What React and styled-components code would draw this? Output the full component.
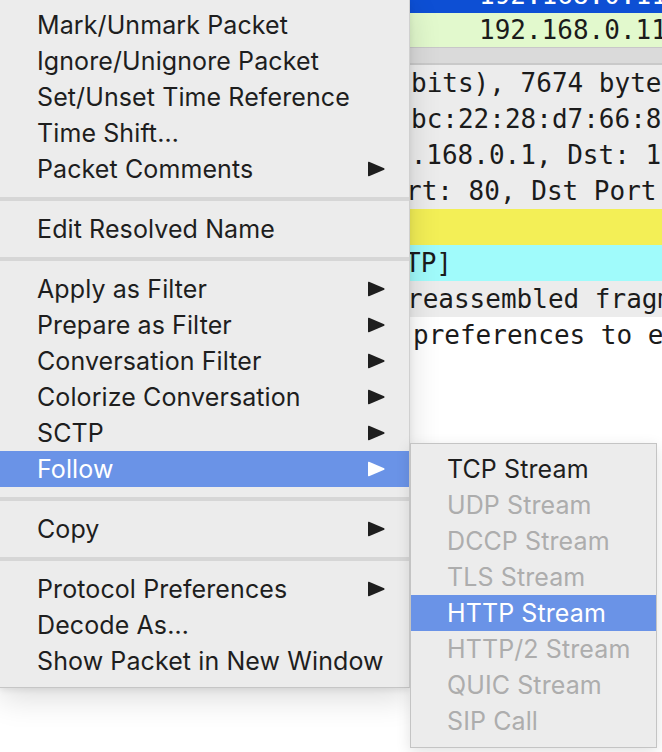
import React from 'react';
import styled, { createGlobalStyle } from 'styled-components';

const GlobalStyle = createGlobalStyle`
	html, body {
		margin: 0;
		padding: 0;
		background: #ffffff;
		overflow: hidden;
	}
`;

const Frame = styled.div`
	position: relative;
	width: 662px;
	height: 752px;
	display: flex;
	overflow: hidden;
	background: #ffffff;
	font-family: Inter, 'Liberation Sans', sans-serif;
`;

const MenuColumn = styled.div`
	width: 410px;
	flex-shrink: 0;
	position: relative;
	z-index: 2;
`;

const Menu = styled.div`
	background: #ececec;
	padding: 7px 0 8px;
	border-bottom: 1px solid #c6c6c6;
	border-right: 1px solid #d0d0d0;
	box-sizing: border-box;
	box-shadow: 0 10px 30px rgba(0, 0, 0, 0.14), 0 2px 6px rgba(0, 0, 0, 0.08);
`;

const Item = styled.div`
	height: 36px;
	display: flex;
	align-items: center;
	justify-content: space-between;
	padding: 0 24px 0 ${p => p.$indent}px;
	font-size: 25px;
	letter-spacing: 0.1px;
	color: ${p => (p.$active ? '#ffffff' : p.$disabled ? '#adadad' : '#1e1e1e')};
	background: ${p => (p.$active ? '#6a93e7' : 'transparent')};
	white-space: nowrap;
`;

const Separator = styled.div`
	height: 4px;
	margin: 10px 0;
	background: #d6d6d6;
`;

const SubMenu = styled.div`
	position: absolute;
	left: 410px;
	top: 443px;
	width: 247px;
	z-index: 3;
	background: #ececec;
	border: 1px solid #c4c4c4;
	box-sizing: border-box;
	padding: 7px 0 8px;
	box-shadow: 0 4px 14px rgba(0, 0, 0, 0.12);
`;

const Backdrop = styled.div`
	flex: 1;
	display: flex;
	flex-direction: column;
	overflow: hidden;
	background: #ffffff;
	font-family: 'DejaVu Sans Mono', 'Liberation Mono', monospace;
	font-size: 26px;
`;

const Row = styled.div`
	height: ${p => p.$h || 36}px;
	flex-shrink: 0;
	background: ${p => p.$bg || '#ececec'};
	color: ${p => p.$fg || '#1b1b1b'};
	white-space: pre;
	overflow: hidden;
	padding-left: ${p => Math.max(p.$indent || 0, 0)}px;
`;

const RowText = styled.div`
	margin-left: ${p => Math.min(p.$indent || 0, 0)}px;
	margin-top: ${p => p.$shift || 0}px;
	height: ${p => p.$h || 36}px;
	line-height: ${p => p.$h || 36}px;
`;

const Splitter = styled.div`
	height: 15px;
	flex-shrink: 0;
	background: #dadada;
	border-top: 1px solid #c8c8c8;
	border-bottom: 2px solid #c9c9c9;
`;

const Blank = styled.div`
	flex: 1;
	background: #ffffff;
`;

const Arrow = ({ color }) => (
	<svg width="17" height="16" viewBox="0 0 17 16">
		<path d="M1 0.8 L16.2 7.3 Q17 8 16.2 8.7 L1 15.2 Q0 15.6 0 14.6 L0 1.4 Q0 0.4 1 0.8 Z" fill={color} />
	</svg>
);

const mainItems = [
	['Mark/Unmark Packet'],
	['Ignore/Unignore Packet'],
	['Set/Unset Time Reference'],
	['Time Shift…'],
	['Packet Comments', 'sub'],
	'-',
	['Edit Resolved Name'],
	'-',
	['Apply as Filter', 'sub'],
	['Prepare as Filter', 'sub'],
	['Conversation Filter', 'sub'],
	['Colorize Conversation', 'sub'],
	['SCTP', 'sub'],
	['Follow', 'sub', 'active'],
	'-',
	['Copy', 'sub'],
	'-',
	['Protocol Preferences', 'sub'],
	['Decode As…'],
	['Show Packet in New Window'],
];

const followItems = [
	['TCP Stream'],
	['UDP Stream', 'disabled'],
	['DCCP Stream', 'disabled'],
	['TLS Stream', 'disabled'],
	['HTTP Stream', 'active'],
	['HTTP/2 Stream', 'disabled'],
	['QUIC Stream', 'disabled'],
	['SIP Call', 'disabled'],
];

const details = [
	{ text: 'bits), 7674 bytes captured', indent: 1 },
	{ text: 'bc:22:28:d7:66:8f', indent: 1 },
	{ text: '2.168.0.1, Dst: 192', indent: -15 },
	{ text: 'rt: 80, Dst Port: 5', indent: -4 },
	{ text: '', bg: '#f3ef56' },
	{ text: 'TP]', indent: -5, bg: '#a0fbfb' },
	{ text: 'reassembled fragments', indent: -3 },
	{ text: 'preferences to enable', indent: 3, bg: '#ffffff' },
];

const App = () => (
	<>
		<GlobalStyle />
		<Frame>
			<MenuColumn>
				<Menu>
					{mainItems.map((it, i) =>
						it === '-' ? (
							<Separator key={i} />
						) : (
							<Item key={i} $indent={37} $active={it[2] === 'active'}>
								<span>{it[0]}</span>
								{it[1] === 'sub' && (
									<Arrow color={it[2] === 'active' ? '#ffffff' : '#1e1e1e'} />
								)}
							</Item>
						)
					)}
				</Menu>
			</MenuColumn>
			<Backdrop>
				<Row $h={13} $bg="#0d4fd4" $fg="#ffffff" $indent={69}>
					<RowText $h={34} $shift={-22}>192.168.0.11</RowText>
				</Row>
				<Row $h={34} $bg="#e2f9cd" $indent={69}>
					<RowText $h={34}>192.168.0.11</RowText>
				</Row>
				<Splitter />
				{details.map((d, i) => (
					<Row key={i} $bg={d.bg} $indent={d.indent}>
						<RowText $indent={d.indent}>{d.text}</RowText>
					</Row>
				))}
				<Blank />
			</Backdrop>
			<SubMenu>
				{followItems.map((it, i) => (
					<Item
						key={i}
						$indent={36}
						$active={it[1] === 'active'}
						$disabled={it[1] === 'disabled'}
					>
						<span>{it[0]}</span>
					</Item>
				))}
			</SubMenu>
		</Frame>
	</>
);

export default App;
